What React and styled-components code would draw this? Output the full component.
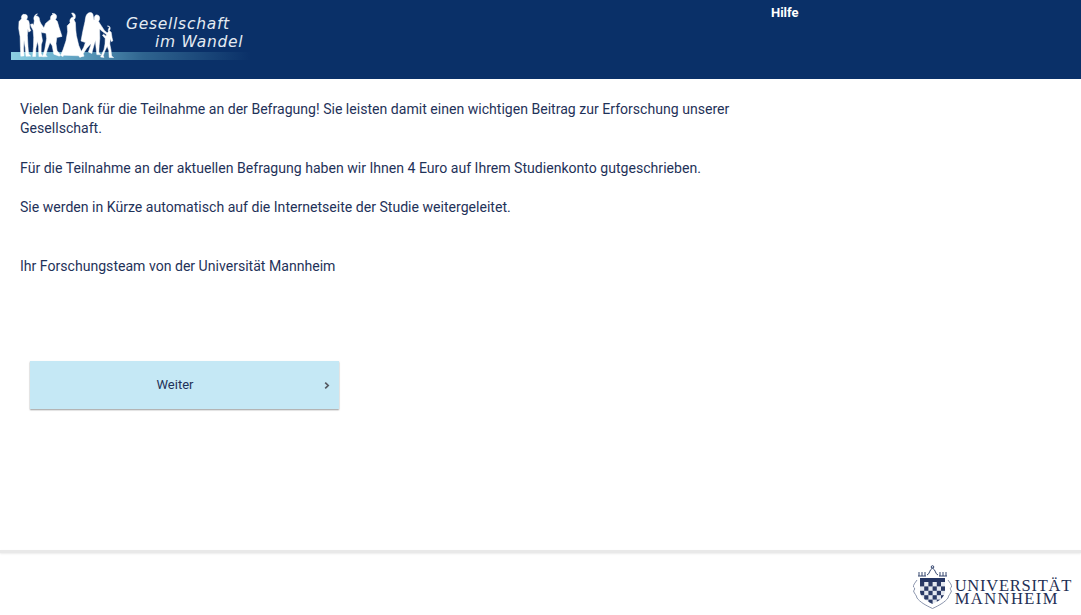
import React from "react";
import styled, { createGlobalStyle } from "styled-components";

const Global = createGlobalStyle`
  html, body { margin: 0; padding: 0; background: #fff; }
  body { font-family: Roboto, "Liberation Sans", sans-serif; overflow: hidden; }
`;

const Page = styled.div`
  width: 1081px;
  height: 615px;
  display: flex;
  flex-direction: column;
  overflow: hidden;
`;

const Header = styled.header`
  height: 79px;
  flex: none;
  background: #0a3068;
  display: flex;
  align-items: flex-start;
  padding-left: 11px;
  box-sizing: border-box;
`;

const Logo = styled.div`
  position: relative;
  width: 240px;
  height: 62px;
  flex: none;
`;

const LogoLine = styled.span`
  position: absolute;
  white-space: nowrap;
  font-family: "DejaVu Sans", sans-serif;
  font-style: italic;
  font-size: 15.5px;
  letter-spacing: 0.72px;
  line-height: 20px;
  color: #e4ebf2;
  left: ${p => p.left}px;
  top: ${p => p.top}px;
`;

const Nav = styled.nav`
  margin-left: 520px;
  padding-top: 5px;
  font-size: 13px;
  line-height: 16px;
  font-weight: 700;
  color: #fff;
`;

const Main = styled.main`
  flex: 1;
  padding: 20.5px 0 0 20px;
  color: #1f3259;
  font-size: 14.08px;
  line-height: 19.6px;
`;

const Message = styled.div`
  width: 720px;
`;

const Paragraph = styled.p`
  margin: 0 0 20px;
`;

const Signature = styled.p`
  margin: 39.4px 0 0;
`;

const NextButton = styled.button`
  position: relative;
  display: block;
  width: 309px;
  height: 48px;
  margin: 84px 0 0 10px;
  padding: 0 19px 0 0;
  border: 0;
  border-radius: 0;
  background: #c5e8f5;
  box-shadow: 0 1px 1.5px rgba(0, 0, 0, 0.4);
  color: #1f3259;
  font-family: Roboto, sans-serif;
  font-size: 13px;
  text-align: center;
`;

const Chevron = styled.svg`
  position: absolute;
  right: 9px;
  top: 21px;
`;

const Divider = styled.div`
  height: 3px;
  flex: none;
  background: #e9e9e9;
  box-shadow: 0 1px 2px rgba(0, 0, 0, 0.08);
`;

const Footer = styled.footer`
  height: 62px;
  flex: none;
  box-sizing: border-box;
  display: flex;
  justify-content: flex-end;
  align-items: flex-start;
  padding: 12px 9px 0 0;
  gap: 2px;
`;

const Wordmark = styled.div`
  font-family: "Liberation Serif", serif;
  font-size: 16.5px;
  line-height: 13px;
  color: #1f2f55;
  padding-top: 14px;
  white-space: nowrap;
`;

const WordLine = styled.div`
  letter-spacing: ${p => p.spacing}px;
`;

const figures = [
  // man, arm towards the woman
  "M23 14.5c2-.6 3.6.8 3.4 2.7-.1 1-.5 1.8-1 2.3l2.2 1.3c.8 2 1 5 1.2 7.5l1 2.4-2 1.4-1-3-.4 6.5.6 11 .6 7.5 2.2 2-4.8.2-.8-9-1.2-7-.4 8 .4 7.6-3.2.3-.4-8.6-.3-11-1.4-8 .3-7 2.6-2.8c-.6-1.8 0-3.8 2.2-4.7z",
  // woman with long hair
  "M34.5 16c2.4-.5 4 1.2 4 3.4 0 1.6.8 2.4 1.4 4l3.4 5 2.4 2.2-.8 1.2-4.4-3-.2 5 1.2 7-1.2 4-.2 8.6 1.6 3-3.8.2-.4-10.2-1-5.2-1.6 7.4-.2 7.8-3 .2.8-10.4.2-9-.6-7-2-3.6-.6-2.2 2-.6 1.2 1.4c.2-3 1-4.6.2-6-.4-2.4 1.4-5.2 3.6-5.4z",
  // man in coat
  "M51 13.6c2.6-.8 4.8 1 4.6 3.2-.1 1.2-.6 2-1.2 2.8l2 2 1.4 5 3.2 9.8-5.2 1.2-.8 6 1 6.8 3.4 4.6-1 1.2-5.6-2-1.6-8.4-2.2-3.4-2.6 7.2-1.6 5.4 1.4 1.6-4.6.2 2.2-7.6 1.8-10.6-.6-5.4-4-.6-4-4.2.8-1.4 4.2 3 2.6-6.6 5-4.2c-.4-2.6.6-4.4 2.8-4.6z",
  // woman in long dress
  "M70.6 13c2.4-.4 4 1.4 3.8 3.4 0 1.4-.6 2.6-1.6 3.2l1.6 3 .4 7.6.6 5.4 2.4 10 3 6.8 1.2 3.4-3 1.6-1.6-1.6-9-.4-5.6-.2-.8 1.4-2.4-1.2 2.4-5.6 3-9 1.6-9-.4-6 3-3c-1-2.8.6-5.6 3.4-5.8z",
  // tall person
  "M88.8 12.6c2-.4 3.4 1 3.4 3.4l.8 4.6.8 7 .4 8-1.4 7.6-3.4 1-3.6 4-3.6 5.6.8 2.4-3.2.2-1.6-1.4 4.4-7.4 1.8-5-4.4-1.6 1.8-9.8 2.2-9.8c.6-3 .4-7.8 4.8-8.8z",
  // adult leading the child
  "M95.2 15c2.2-.4 3.6 1.2 3.4 3.2 0 1.2-.4 2.4-1.2 3l1.4 2.2 4.6 7 3 2.6-1 1.4-5.2-3.8-1.6-1.6.2 9.6-.6 7-.4 6.6 2 2.6-4-.2-1-9-.4-5.4-2.4 8.6-1.2 4.6-3.4-1.4 2.6-7.6 1.2-10.6.2-11.2 2-3.2c-.6-1.8.6-4.2 1.8-4.6z",
  // child
  "M106.4 26c1.8-.3 3 .8 2.8 2.4 0 1-.4 1.6-1 2.2l2 1.6.8 5.2.8 3.6-1.6.6-1-3.2-.4 5.6 1.2 6 .6 6 2 1.6-4.4-.2-.4-6.6-1.6-4.6-2.4 5-1.6 4.6.8 1.6-3.4-.4 3.4-7.6 1-5.4.2-5.4-2.8-3.4 1.2-1 2.4 2 .8-2.8 1.6-1.8c-.6-1.6.2-3.6 1.4-4z",
];

const LogoSvg = styled.svg`
  display: block;
  filter: blur(0.35px);
`;

const LogoArt = () => (
  <LogoSvg width="240" height="62" viewBox="11 0 240 62">
    <defs>
      <linearGradient id="strip" x1="0" x2="1" y1="0" y2="0">
        <stop offset="0" stopColor="#8ccfe2" />
        <stop offset="0.18" stopColor="#6fb4d0" />
        <stop offset="0.55" stopColor="#2f648f" />
        <stop offset="1" stopColor="#0a3068" />
      </linearGradient>
    </defs>
    <rect x="11" y="52" width="240" height="8" fill="url(#strip)" />
    <g transform="translate(1 0)">
      {figures.map((d, i) => (
        <path key={i} d={d} fill="#fff" stroke="#fff" strokeWidth="0.5" strokeLinejoin="round" />
      ))}
    </g>
  </LogoSvg>
);

const checks = [];
for (let row = 0; row < 5; row++) {
  for (let col = 0; col < 6; col++) {
    if ((row + col) % 2 === 0) checks.push([col, row]);
  }
}

const CrestSvg = styled.svg`
  display: block;
  filter: blur(0.3px);
`;

const Crest = () => (
  <CrestSvg width="41" height="45" viewBox="0 0 41 45">
    <defs>
      <clipPath id="shield">
        <path d="M8 13h25v13c0 6-6 10-12.500 13C14 36 8 32 8 26z" />
      </clipPath>
    </defs>
    <g fill="none" stroke="#34466f" strokeWidth="1">
      <path d="M6 11h8M7 7v4M10 7v4M13 7v4" />
      <path d="M27 11h8M28 7v4M31 7v4M34 7v4" />
      <path d="M15 10c3-1 2-5 5.500-7 3.500 2 2.500 6 5.500 7" />
      <circle cx="20.500" cy="2" r="1.300" />
    </g>
    <g fill="none" stroke="#7d88a3" strokeWidth="0.9">
      <path d="M5 15c-2 3-4 5-3.500 7 2 1 1 3 0 4 1 3 3 4 3.500 7 3 4 8 7 15.500 10.500C28 40 33 37 36 33c.5-3 2.500-4 3.500-7-1-1-2-3 0-4 .5-2-1.500-4-3.500-7" />
    </g>
    <g clipPath="url(#shield)">
      <rect x="8" y="12" width="25" height="30" fill="#e4e8f0" />
      <rect x="8" y="12" width="25" height="5" fill="#243563" />
      {checks.map(([c, r]) => (
        <rect key={c + "-" + r} x={8 + c * 4.2} y={17 + r * 4.4} width="4.2" height="4.4" fill="#2a3a66" />
      ))}
    </g>
  </CrestSvg>
);

export default function App() {
  return (
    <Page>
      <Global />
      <Header>
        <Logo>
          <LogoArt />
          <LogoLine left={115} top={14}>Gesellschaft</LogoLine>
          <LogoLine left={144} top={32}>im Wandel</LogoLine>
        </Logo>
        <Nav>Hilfe</Nav>
      </Header>
      <Main>
        <Message>
          <Paragraph>
            Vielen Dank für die Teilnahme an der Befragung! Sie leisten damit einen wichtigen Beitrag zur Erforschung unserer
            <br />
            Gesellschaft.
          </Paragraph>
          <Paragraph>Für die Teilnahme an der aktuellen Befragung haben wir Ihnen 4 Euro auf Ihrem Studienkonto gutgeschrieben.</Paragraph>
          <Paragraph>Sie werden in Kürze automatisch auf die Internetseite der Studie weitergeleitet.</Paragraph>
          <Signature>Ihr Forschungsteam von der Universität Mannheim</Signature>
        </Message>
        <NextButton>
          Weiter
          <Chevron width="6" height="7" viewBox="0 0 6 7">
            <path d="M1.200 .6L4.200 3.500 1.200 6.400" fill="none" stroke="#555a62" strokeWidth="1.700" />
          </Chevron>
        </NextButton>
      </Main>
      <Divider />
      <Footer>
        <Crest />
        <Wordmark>
          <WordLine spacing={0.75}>UNIVERSITÄT</WordLine>
          <WordLine spacing={1.45}>MANNHEIM</WordLine>
        </Wordmark>
      </Footer>
    </Page>
  );
}
